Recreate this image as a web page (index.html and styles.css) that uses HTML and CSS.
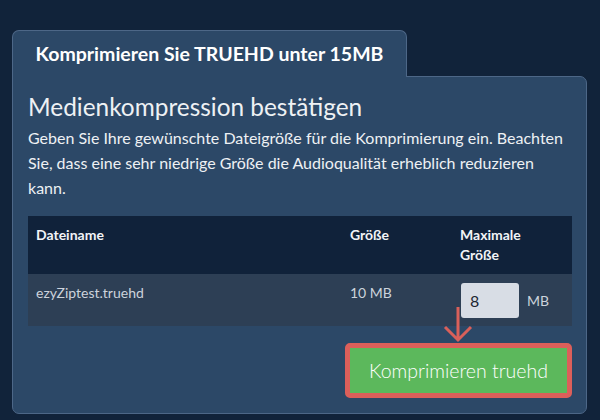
FILE: index.html
```html
<!DOCTYPE html>
<html lang="de">
<head>
<meta charset="utf-8">
<title>Komprimieren Sie TRUEHD unter 15MB</title>
<link rel="stylesheet" href="styles.css">
</head>
<body>
<div class="wrap">
  <div class="tab">Komprimieren Sie TRUEHD unter 15MB</div>
  <div class="panel">
    <h2 class="title">Medienkompression bestätigen</h2>
    <p class="desc">Geben Sie Ihre gewünschte Dateigröße für die Komprimierung ein. Beachten Sie, dass eine sehr niedrige Größe die Audioqualität erheblich reduzieren kann.</p>
    <table class="files">
      <thead>
        <tr>
          <th class="c-name">Dateiname</th>
          <th class="c-size">Größe</th>
          <th class="c-max">Maximale<br>Größe</th>
        </tr>
      </thead>
      <tbody>
        <tr>
          <td class="c-name">ezyZiptest.truehd</td>
          <td class="c-size">10 MB</td>
          <td class="c-max">
            <div class="maxcell"><input class="num" type="text" value="8"><span class="unit">MB</span></div>
          </td>
        </tr>
      </tbody>
    </table>
    <div class="actions">
      <button class="go" type="button">Komprimieren truehd</button>
    </div>
    <svg class="arrow" width="30" height="38" viewBox="0 0 30 38" aria-hidden="true">
      <path d="M15 2 V35 M2 22 L15 35 L28 22" fill="none" stroke="#d9605a" stroke-width="3" stroke-linecap="butt" stroke-linejoin="miter"/>
    </svg>
  </div>
</div>
</body>
</html>
```
FILE: styles.css
```css
html, body {
  margin: 0;
  padding: 0;
}
body {
  background: #11233a;
  font-family: Lato, "Noto Sans", sans-serif;
  color: #e8ecf1;
}
.wrap {
  padding: 30px 13px 0 12px;
}
.tab {
  position: relative;
  z-index: 1;
  box-sizing: border-box;
  width: 395px;
  height: 47px;
  margin-bottom: -1px;
  background: #2c4867;
  border: 1px solid #4d6787;
  border-bottom: none;
  border-radius: 7px 7px 0 0;
  font-size: 19.5px;
  font-weight: 700;
  color: #ffffff;
  text-align: center;
  line-height: 45px;
}
.panel {
  position: relative;
  background: #2c4867;
  border: 1px solid #4d6787;
  border-radius: 0 7px 7px 7px;
  padding: 0 14px 15px 15px;
}
.title {
  margin: 15px 0 4px;
  font-size: 24.4px;
  font-weight: 400;
  line-height: 29px;
  color: #eef1f4;
}
.desc {
  margin: 0 0 16px;
  font-size: 16px;
  line-height: 25px;
  color: #eef1f4;
}
.files {
  width: 544px;
  border-collapse: collapse;
  table-layout: fixed;
  font-size: 14px;
  line-height: 20px;
}
.files th {
  background: #10223a;
  text-align: left;
  font-weight: 700;
  color: #f2f4f7;
  padding: 9px 8px;
  vertical-align: top;
}
.files td {
  background: #2d3f55;
  color: #ccd3dc;
  padding: 9px 8px 8px;
  vertical-align: top;
}
.c-name { width: 298px; }
.c-size { width: 94px; }
.c-max { width: 104px; }
.maxcell {
  display: flex;
  align-items: center;
  gap: 8px;
}
.num {
  box-sizing: border-box;
  width: 58px;
  height: 35px;
  margin: 0 0 0 1px;
  padding: 0 9px;
  border: none;
  border-radius: 3px;
  background: #d8dde5;
  color: #1d2633;
  font-family: Lato, "Noto Sans", sans-serif;
  font-size: 16px;
}
.unit {
  font-size: 14px;
  color: #ccd3dc;
}
.actions {
  display: flex;
  justify-content: flex-end;
  width: 544px;
  margin-top: 17px;
}
.go {
  box-sizing: border-box;
  width: 227px;
  height: 55px;
  border: 5px solid #dc5f5a;
  border-radius: 5px;
  background: #5cb85c;
  color: #ffffff;
  font-family: Lato, "Noto Sans", sans-serif;
  font-size: 19.5px;
  font-weight: 300;
  padding: 0;
}
.arrow {
  position: absolute;
  left: 430px;
  top: 228px;
}
```
